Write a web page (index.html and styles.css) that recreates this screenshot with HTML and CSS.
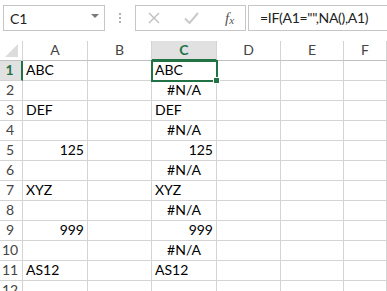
FILE: index.html
```html
<!DOCTYPE html>
<html lang="en">
<head>
    <meta charset="UTF-8">
    <title>Sheet1 - Excel</title>
    <link rel="stylesheet" href="styles.css">
</head>
<body>
    <!-- Formula bar -->
    <div class="formula-bar">
        <div class="name-box">
            <span>C1</span>
            <svg class="drop" width="8" height="4" viewBox="0 0 8 4"><path d="M0 0H8L4 4Z" fill="#7a7a7a"/></svg>
        </div>
        <div class="grip"><i></i><i></i><i></i></div>
        <div class="fx-buttons">
            <svg width="12" height="12" viewBox="0 0 12 12"><path d="M1 1L11 11M11 1L1 11" stroke="#bdbdbd" stroke-width="1.3" fill="none"/></svg>
            <svg width="15" height="12" viewBox="0 0 15 12"><path d="M1 6.5L5.5 11L14 1" stroke="#c9c9c9" stroke-width="2" fill="none"/></svg>
            <span class="fx">f<sub>x</sub></span>
        </div>
        <div class="formula">=IF(A1="",NA(),A1)</div>
    </div>

    <!-- Grid -->
    <div class="sheet">
        <div class="corner"><span class="tri"></span></div>
        <div class="col-head">A</div>
        <div class="col-head">B</div>
        <div class="col-head active">C</div>
        <div class="col-head">D</div>
        <div class="col-head">E</div>
        <div class="col-head">F</div>

        <div class="row-head active">1</div>
        <div class="cell">ABC</div><div class="cell"></div>
        <div class="cell selected">ABC<span class="sel-box"><span class="handle"></span></span></div>
        <div class="cell"></div><div class="cell"></div><div class="cell"></div>

        <div class="row-head">2</div>
        <div class="cell"></div><div class="cell"></div><div class="cell err">#N/A</div>
        <div class="cell"></div><div class="cell"></div><div class="cell"></div>

        <div class="row-head">3</div>
        <div class="cell">DEF</div><div class="cell"></div><div class="cell">DEF</div>
        <div class="cell"></div><div class="cell"></div><div class="cell"></div>

        <div class="row-head">4</div>
        <div class="cell"></div><div class="cell"></div><div class="cell err">#N/A</div>
        <div class="cell"></div><div class="cell"></div><div class="cell"></div>

        <div class="row-head">5</div>
        <div class="cell num">125</div><div class="cell"></div><div class="cell num">125</div>
        <div class="cell"></div><div class="cell"></div><div class="cell"></div>

        <div class="row-head">6</div>
        <div class="cell"></div><div class="cell"></div><div class="cell err">#N/A</div>
        <div class="cell"></div><div class="cell"></div><div class="cell"></div>

        <div class="row-head">7</div>
        <div class="cell">XYZ</div><div class="cell"></div><div class="cell">XYZ</div>
        <div class="cell"></div><div class="cell"></div><div class="cell"></div>

        <div class="row-head">8</div>
        <div class="cell"></div><div class="cell"></div><div class="cell err">#N/A</div>
        <div class="cell"></div><div class="cell"></div><div class="cell"></div>

        <div class="row-head">9</div>
        <div class="cell num">999</div><div class="cell"></div><div class="cell num">999</div>
        <div class="cell"></div><div class="cell"></div><div class="cell"></div>

        <div class="row-head">10</div>
        <div class="cell"></div><div class="cell"></div><div class="cell err">#N/A</div>
        <div class="cell"></div><div class="cell"></div><div class="cell"></div>

        <div class="row-head">11</div>
        <div class="cell">AS12</div><div class="cell"></div><div class="cell">AS12</div>
        <div class="cell"></div><div class="cell"></div><div class="cell"></div>

        <div class="row-head">12</div>
        <div class="cell"></div><div class="cell"></div><div class="cell"></div>
        <div class="cell"></div><div class="cell"></div><div class="cell"></div>
    </div>
</body>
</html>
```

FILE: styles.css
```css
/* General */
body {
    margin: 0;
    height: 291px;
    overflow: hidden;
    background: #ffffff;
    font-family: 'Lato', 'Liberation Sans', sans-serif;
    color: #000;
}

/* Formula bar */
.formula-bar {
    display: flex;
    height: 41px;
    padding: 5px 0 0 3px;
    box-sizing: border-box;
}

.name-box {
    width: 102px;
    height: 26px;
    border: 1px solid #c6c6c6;
    box-sizing: border-box;
    display: flex;
    align-items: center;
    justify-content: space-between;
    padding: 0 5px 0 6px;
    font-size: 14px;
    color: #222;
}

.drop {
    margin-bottom: 4px;
}

.grip {
    width: 30px;
    display: flex;
    flex-direction: column;
    align-items: center;
    padding-top: 8px;
    gap: 2px;
}

.grip i {
    width: 2px;
    height: 2px;
    background: #b0b0b0;
}

.fx-buttons {
    width: 111px;
    height: 26px;
    border: 1px solid #c6c6c6;
    box-sizing: border-box;
    display: flex;
    align-items: center;
    padding-left: 12px;
    gap: 24px;
}

.fx {
    font-family: 'Liberation Serif', serif;
    font-style: italic;
    font-size: 15px;
    color: #555;
    margin-left: 2px;
}

.fx sub {
    font-size: 11px;
    vertical-align: -1px;
}

.formula {
    flex: 1;
    height: 26px;
    margin-left: 2px;
    margin-right: -5px;
    border: 1px solid #c6c6c6;
    box-sizing: border-box;
    padding-left: 11px;
    font-size: 14px;
    letter-spacing: -0.3px;
    line-height: 24px;
    color: #222;
}

/* Sheet grid */
.sheet {
    display: grid;
    grid-template-columns: 23px 65px 64px 65px 64px 63px 1fr;
    grid-auto-rows: 20px;
    font-size: 14px;
}

.sheet > div {
    box-sizing: border-box;
    border-right: 1px solid #d4d4d4;
    border-bottom: 1px solid #d4d4d4;
    display: flex;
    align-items: flex-end;
    padding-bottom: 2px;
    white-space: nowrap;
}

.corner {
    position: relative;
    border-bottom-color: #c0c0c0 !important;
}

.tri {
    position: absolute;
    left: 5px;
    top: 3px;
    width: 0;
    height: 0;
    border-left: 13px solid transparent;
    border-bottom: 13px solid #dcdcdc;
}

.col-head {
    justify-content: center;
    color: #444;
    border-bottom-color: #c0c0c0 !important;
}

.col-head.active {
    background: #e1e1e1;
    color: #217346;
    font-weight: bold;
    border-bottom: 2px solid #217346 !important;
    padding-bottom: 1px;
}

.row-head {
    justify-content: center;
    color: #444;
    padding-right: 2px;
}

.row-head.active {
    background: #e1e1e1;
    color: #217346;
    font-weight: bold;
    border-right: 2px solid #217346 !important;
}

.cell {
    padding-left: 3px;
    padding-right: 3px;
}

.cell.num {
    justify-content: flex-end;
}

.cell.err {
    justify-content: center;
}

.cell.selected {
    position: relative;
}

.sel-box {
    position: absolute;
    left: -1px;
    top: -1px;
    width: 67px;
    height: 22px;
    border: 2px solid #217346;
    box-sizing: border-box;
}

.handle {
    position: absolute;
    right: -4px;
    bottom: -4px;
    width: 5px;
    height: 5px;
    background: #217346;
    border: 1px solid #fff;
}
```
